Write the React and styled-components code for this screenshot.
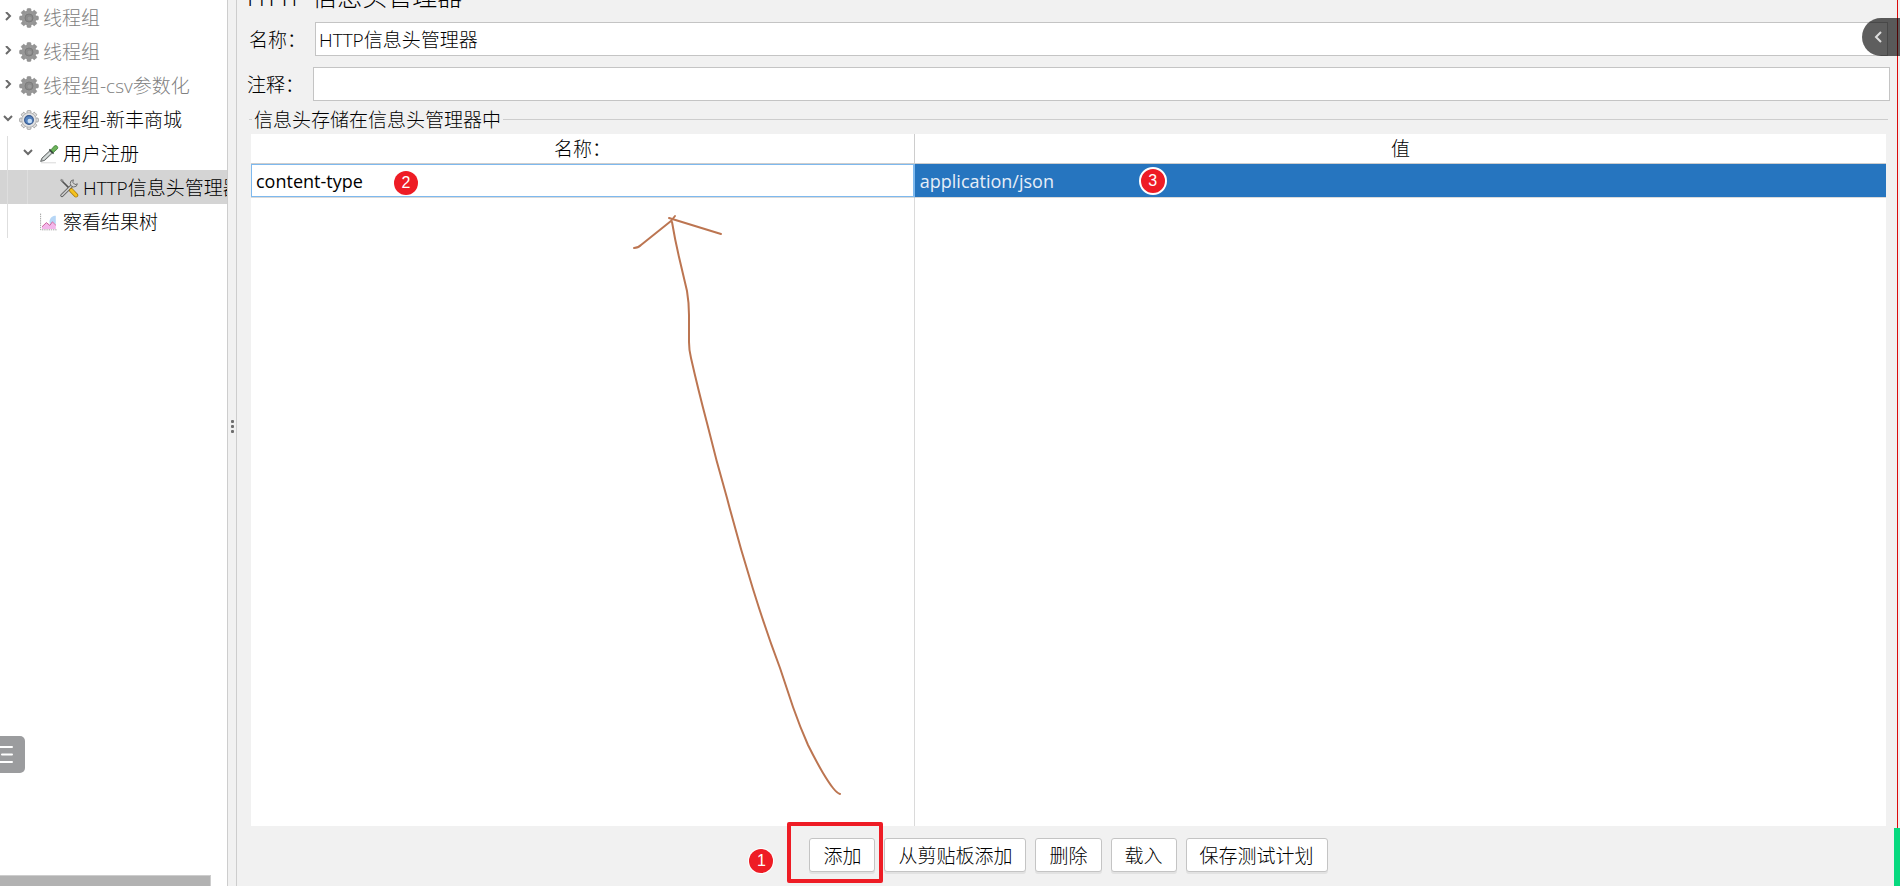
import React from 'react';
import styled, { createGlobalStyle } from 'styled-components';

const COLORS = {
  panel: '#f1f1f1',
  line: '#cdcdcd',
  inputBorder: '#c4c4c4',
  selectedRow: '#d4d4d4',
  selectedCell: '#2675bf',
  focus: '#7eb9ee',
  red: '#ee1c25',
  pen: '#bc7551',
  green: '#07d97f',
};

const TREE = [
  { id: 1, label: '线程组', depth: 0, icon: 'gearOff', state: 'closed', disabled: true },
  { id: 2, label: '线程组', depth: 0, icon: 'gearOff', state: 'closed', disabled: true },
  { id: 3, label: '线程组-csv参数化', depth: 0, icon: 'gearOff', state: 'closed', disabled: true },
  { id: 4, label: '线程组-新丰商城', depth: 0, icon: 'gear', state: 'open' },
  { id: 5, label: '用户注册', depth: 1, icon: 'pipette', state: 'open' },
  { id: 6, label: 'HTTP信息头管理器', depth: 2, icon: 'tools', selected: true },
  { id: 7, label: '察看结果树', depth: 1, icon: 'chart' },
];

const Teeth = ({ fill, stroke }) => (
  <g fill={fill} stroke={stroke} strokeWidth="0.6">
    {[0, 45, 90, 135].map((angle) => (
      <rect key={angle} x="8" y="0.6" width="4" height="18.8" rx="1" transform={`rotate(${angle} 10 10)`} />
    ))}
  </g>
);

const ICONS = {
  gearOff: (
    <>
      <Teeth fill="#949494" stroke="#8c8c8c" />
      <circle cx="10" cy="10" r="7.4" fill="#979797" />
      <circle cx="10" cy="10" r="4" fill="#8a8a8a" stroke="#7c7c7c" />
      <circle cx="10.6" cy="10.6" r="2" fill="#999" />
    </>
  ),
  gear: (
    <>
      <Teeth fill="#dcdcdc" stroke="#7d7d7d" />
      <circle cx="10" cy="10" r="7.2" fill="#e2e2e2" stroke="#a5a5a5" strokeWidth="0.6" />
      <circle cx="10" cy="10" r="4.4" fill="#5583bf" stroke="#37598f" strokeWidth="1.1" />
      <circle cx="10.8" cy="11" r="2.3" fill="#c3dcf5" />
    </>
  ),
  pipette: (
    <>
      <path d="M2 18.8h15" stroke="#d9d9d9" />
      <path d="M1.6 17.4 3 14 11 6.6l2.4 2.4-7.8 7.4z" fill="#b9c0bf" stroke="#5d6161" strokeWidth="0.9" />
      <path d="m4 15.4 7.4-7" stroke="#f3f6f5" />
      <path d="m10.4 5.4 4.2 4.2" stroke="#35423a" strokeWidth="1.5" />
      <path d="M12 5.8 15.4 2c1.4-1.4 4.4.8 3 2.8l-4 3.6z" fill="#6db35b" stroke="#397b31" strokeWidth="0.8" />
    </>
  ),
  tools: (
    <>
      <path d="m2 2 9.6 9.6" stroke="#525252" strokeWidth="1.6" />
      <path d="m1.6 1.6 2.6 1.2" stroke="#8b8b8b" strokeWidth="2" />
      <path d="M3 17.4 14 6.6" stroke="#555" strokeWidth="3.4" strokeLinecap="round" />
      <path d="M3 17.4 14 6.6" stroke="#c9c9c9" strokeWidth="1.8" strokeLinecap="round" />
      <path d="M14.4 1.8a3.6 3.6 0 1 0 4 4L16 6.6 13.8 4.4z" fill="#d2d2d2" stroke="#666" strokeWidth="0.9" />
      <path d="m12.4 12.4 4.6 4.8" stroke="#a17307" strokeWidth="4.4" strokeLinecap="round" />
      <path d="m12.4 12.4 4.6 4.8" stroke="#f4c21f" strokeWidth="3" strokeLinecap="round" />
    </>
  ),
  chart: (
    <>
      <path d="M3 17v-2.4l4.4-4.2 3.4 2.8 2.6-3.4 3.4 3.6V17z" fill="#f3b6ea" />
      <path d="M10.4 9.6c.8-4.4 3.4-5.8 6.4-5.8v8.6l-3.2-2.8-2.6 3z" fill="#b6d6f6" />
      <path d="m3 14.8 4.4-4.2 3.4 2.8 2.6-3.6 3.6 3.6" fill="none" stroke="#c65a94" strokeWidth="0.9" />
      <path d="M1.6 1.6v16.2h16" fill="none" stroke="#9a9a9a" strokeWidth="0.9" strokeDasharray="1.4 0.8" />
    </>
  ),
};

const Chevron = ({ state }) => (
  <svg width="10" height="10" viewBox="0 0 10 10" fill="none" stroke="#6a6a6a" strokeWidth="2">
    <path d={state === 'open' ? 'M1 2l4 4 4-4' : 'M3 0l4 4-4 4'} />
  </svg>
);

const TreeItem = ({ label, depth, icon, state, disabled, selected }) => (
  <TreeRow role="treeitem" aria-level={depth + 1} aria-selected={!!selected} $selected={selected} $disabled={disabled}>
    {Array.from({ length: depth }, (_, i) => <Guide key={i} />)}
    <Toggle>{state && <Chevron state={state} />}</Toggle>
    <TreeIcon viewBox="0 0 20 20" fill="none">{ICONS[icon]}</TreeIcon>
    <TreeLabel>{label}</TreeLabel>
  </TreeRow>
);

// Hand-drawn arrow pointing from the add button up to the new row.
const PenArrow = () => (
  <Pen viewBox="620 200 250 620" width="250" height="620" fill="none" stroke={COLORS.pen} strokeWidth="2" strokeLinecap="round" strokeLinejoin="round">
    <path d="M634 248q4 0 7-3L671 221l4-5" />
    <path d="M669 218l52 16" />
    <path d="M672 222q3 18 7 35l8 34q2 12 2 24v27q0 8 2 16q7 31 16 65q9 37 20 75q12 46 26 91q13 42 27 79l13 39q7 20 15 38q8 16 15 28q6 10 10 15q4 5 7 6" />
  </Pen>
);

const App = () => (
  <>
    <GlobalStyle />
    <Page>
      <Sidebar>
        <Tree role="tree" aria-label="线程组">
          {TREE.map((item) => <TreeItem key={item.id} {...item} />)}
        </Tree>
        <OutlineButton type="button" aria-label="目录">
          <svg width="25" height="37" viewBox="0 0 25 37" stroke="#fff" strokeWidth="2" strokeLinecap="round">
            <path d="M-2 11h14M2 18.5h10M-2 26h14" />
          </svg>
        </OutlineButton>
        <ScrollThumb />
      </Sidebar>
      <Splitter>
        <Dot />
        <Dot />
        <Dot />
      </Splitter>
      <Main>
        <TitleClip>
          <Title>HTTP 信息头管理器</Title>
        </TitleClip>
        <Field $inset>
          <FieldLabel htmlFor="name">名称：</FieldLabel>
          <TextInput id="name" defaultValue="HTTP信息头管理器" />
        </Field>
        <Field>
          <FieldLabel htmlFor="comment">注释：</FieldLabel>
          <TextInput id="comment" defaultValue="" />
        </Field>
        <GroupTitle id="headers">信息头存储在信息头管理器中</GroupTitle>
        <TableArea>
          <HeaderTable aria-labelledby="headers">
            <colgroup>
              <NameCol />
              <col />
            </colgroup>
            <thead>
              <tr>
                <HeadCell>名称：</HeadCell>
                <HeadCell>值</HeadCell>
              </tr>
            </thead>
            <tbody>
              <tr>
                <Cell $focused>
                  content-type
                  <Badge $left={143} $top={7}>2</Badge>
                </Cell>
                <Cell $selected>
                  application/json
                  <Badge $left={224} $top={3} $ring>3</Badge>
                </Cell>
              </tr>
              <tr>
                <EmptyCell />
                <EmptyCell />
              </tr>
            </tbody>
          </HeaderTable>
          <PenArrow />
        </TableArea>
        <ButtonBar>
          <Marked>
            <Button type="button">添加</Button>
            <Frame />
            <Badge $left={-60} $top={11}>1</Badge>
          </Marked>
          <Button type="button">从剪贴板添加</Button>
          <Button type="button">删除</Button>
          <Button type="button">载入</Button>
          <Button type="button">保存测试计划</Button>
        </ButtonBar>
      </Main>
      <RedEdge />
      <GreenEdge />
      <DrawerButton type="button" aria-label="展开">
        <svg width="10" height="14" viewBox="0 0 10 14" fill="none" stroke="#ddd" strokeWidth="2">
          <path d="M7 2 2 7l5 5" />
        </svg>
      </DrawerButton>
    </Page>
  </>
);

export default App;

const GlobalStyle = createGlobalStyle`
* {
  box-sizing: border-box;
}
body {
  margin: 0;
  background: ${COLORS.panel};
}
body, button, input {
  font-family: 'Open Sans', 'Noto Sans CJK SC', sans-serif;
  font-size: 19px;
  font-weight: 300;
  color: #000;
}
`

const Page = styled.div`
position: relative;
display: flex;
height: 100vh;
overflow: hidden;
`

const Sidebar = styled.aside`
position: relative;
display: flex;
flex-direction: column;
justify-content: space-between;
width: 228px;
flex-shrink: 0;
overflow: hidden;
background: #fff;
border-right: 1px solid ${COLORS.line};
`

const Tree = styled.ul`
margin: 0;
padding: 0;
list-style: none;
`

const TreeRow = styled.li`
display: flex;
align-items: center;
height: 34px;
white-space: nowrap;
color: ${props => props.$disabled ? '#808080' : '#000'};
background: ${props => props.$selected ? COLORS.selectedRow : 'transparent'};
`

const TreeLabel = styled.span`
padding-top: 2px;
line-height: 32px;
`

const Guide = styled.span`
flex: none;
width: 13px;
height: 100%;
margin-left: 7px;
border-left: 1px solid #dedede;
`

const Toggle = styled.span`
display: flex;
justify-content: center;
flex: none;
width: 19px;
padding-right: 4px;
`

const TreeIcon = styled.svg`
flex: none;
width: 20px;
height: 20px;
margin: 2px 4px 0 0;
`

const OutlineButton = styled.button`
position: absolute;
left: 0;
bottom: 113px;
width: 25px;
height: 37px;
padding: 0;
border: 0;
border-radius: 0 5px 5px 0;
background: #9b9c9e;
`

const ScrollThumb = styled.div`
width: 211px;
height: 11px;
background: #b2b2b2;
border: 1px solid ${COLORS.line};
border-width: 1px 1px 0 0;
`

const Splitter = styled.div`
display: flex;
flex-direction: column;
align-items: center;
justify-content: center;
gap: 2px;
flex: none;
width: 9px;
padding-bottom: 34px;
background: ${COLORS.panel};
border-right: 1px solid ${COLORS.line};
`

const Dot = styled.span`
width: 3px;
height: 3px;
border-radius: 1px;
background: #6e6e6e;
`

const Main = styled.main`
display: flex;
flex-direction: column;
flex: 1;
min-width: 0;
padding: 0 10px;
`

// The heading is scrolled mostly out of view, only its foot shows.
const TitleClip = styled.div`
display: flex;
align-items: flex-end;
height: 12px;
margin-bottom: 10px;
overflow: hidden;
`

const Title = styled.h1`
margin: 0;
font-size: 25px;
font-weight: 300;
line-height: 32px;
`

const Field = styled.div`
display: flex;
align-items: center;
margin-bottom: 11px;
padding: ${props => props.$inset ? '0 2px' : '0'};
`

const FieldLabel = styled.label`
flex: none;
width: 66px;
`

const TextInput = styled.input`
flex: 1;
min-width: 0;
height: 34px;
padding: 0 3px;
border: 1px solid ${COLORS.inputBorder};
border-radius: 0;
background: #fff;
outline: none;
`

const GroupTitle = styled.h2`
display: flex;
align-items: center;
gap: 2px;
height: 30px;
margin: -8px 2px 0;
font-size: 19px;
font-weight: 300;

&::before, &::after {
  content: '';
  width: 3px;
  height: 1px;
  background: ${COLORS.line};
}
&::after {
  flex: 1;
}
`

const TableArea = styled.div`
position: relative;
flex: 1;
min-height: 0;
margin: 0 4px;
background: #fff;
`

const HeaderTable = styled.table`
width: 100%;
height: 100%;
table-layout: fixed;
border-collapse: separate;
border-spacing: 0;
`

const NameCol = styled.col`
width: 40.6%;
`

const HeadCell = styled.th`
height: 30px;
padding: 2px 0 0;
font-weight: 300;
line-height: 27px;
border-bottom: 1px solid ${COLORS.line};

&:first-child {
  border-right: 1px solid ${COLORS.line};
}
`

const Cell = styled.td`
position: relative;
height: 34px;
padding: 0 5px;
font-size: 18px;
font-weight: 400;
line-height: 32px;
color: ${props => props.$selected ? '#e6eef7' : '#000'};
background: ${props => props.$selected ? COLORS.selectedCell : '#fff'};
background-clip: padding-box;
border-bottom: 1px solid #dadada;
box-shadow: ${props => props.$focused ? `inset 0 0 0 1px ${COLORS.focus}` : 'none'};

&:first-child {
  border-right: 1px solid ${COLORS.focus};
}
`

const EmptyCell = styled.td`
padding: 0;

&:first-child {
  border-right: 1px solid #dadada;
}
`

const Badge = styled.span`
position: absolute;
left: ${props => props.$left}px;
top: ${props => props.$top}px;
display: flex;
align-items: center;
justify-content: center;
width: ${props => props.$ring ? 28 : 24}px;
height: ${props => props.$ring ? 28 : 24}px;
border: ${props => props.$ring ? '2px solid #fff' : 'none'};
border-radius: 50%;
box-shadow: ${props => props.$ring ? 'none' : '0 0 0 1px #fff'};
background: ${COLORS.red};
color: #fff;
font-family: 'Liberation Sans', sans-serif;
font-size: 16px;
font-weight: 400;
line-height: 1;
`

const Pen = styled.svg`
position: absolute;
left: 369px;
top: 66px;
pointer-events: none;
`

const ButtonBar = styled.div`
display: flex;
justify-content: center;
gap: 9px;
padding: 12px 0 14px;
`

const Marked = styled.div`
position: relative;
`

const Frame = styled.span`
position: absolute;
inset: -16px -8px -11px -22px;
border: 4px solid ${COLORS.red};
border-radius: 2px;
pointer-events: none;
`

const Button = styled.button`
height: 34px;
padding: 2px 13px 0;
line-height: 30px;
border: 1px solid ${COLORS.inputBorder};
border-radius: 3px;
box-shadow: 0 2px 0 #e2e2e2;
background: #fff;
`

const RedEdge = styled.div`
position: absolute;
top: 0;
bottom: 58px;
right: 2px;
width: 1px;
background: #dc0a0a;
`

const GreenEdge = styled.div`
position: absolute;
right: 0;
bottom: 0;
width: 6px;
height: 58px;
background: ${COLORS.green};
`

const DrawerButton = styled.button`
position: absolute;
top: 18px;
right: 0;
display: flex;
align-items: center;
width: 38px;
height: 38px;
padding: 0 0 0 12px;
border: 0;
border-radius: 19px 0 0 19px;
background: rgba(0, 0, 0, 0.63);
`
